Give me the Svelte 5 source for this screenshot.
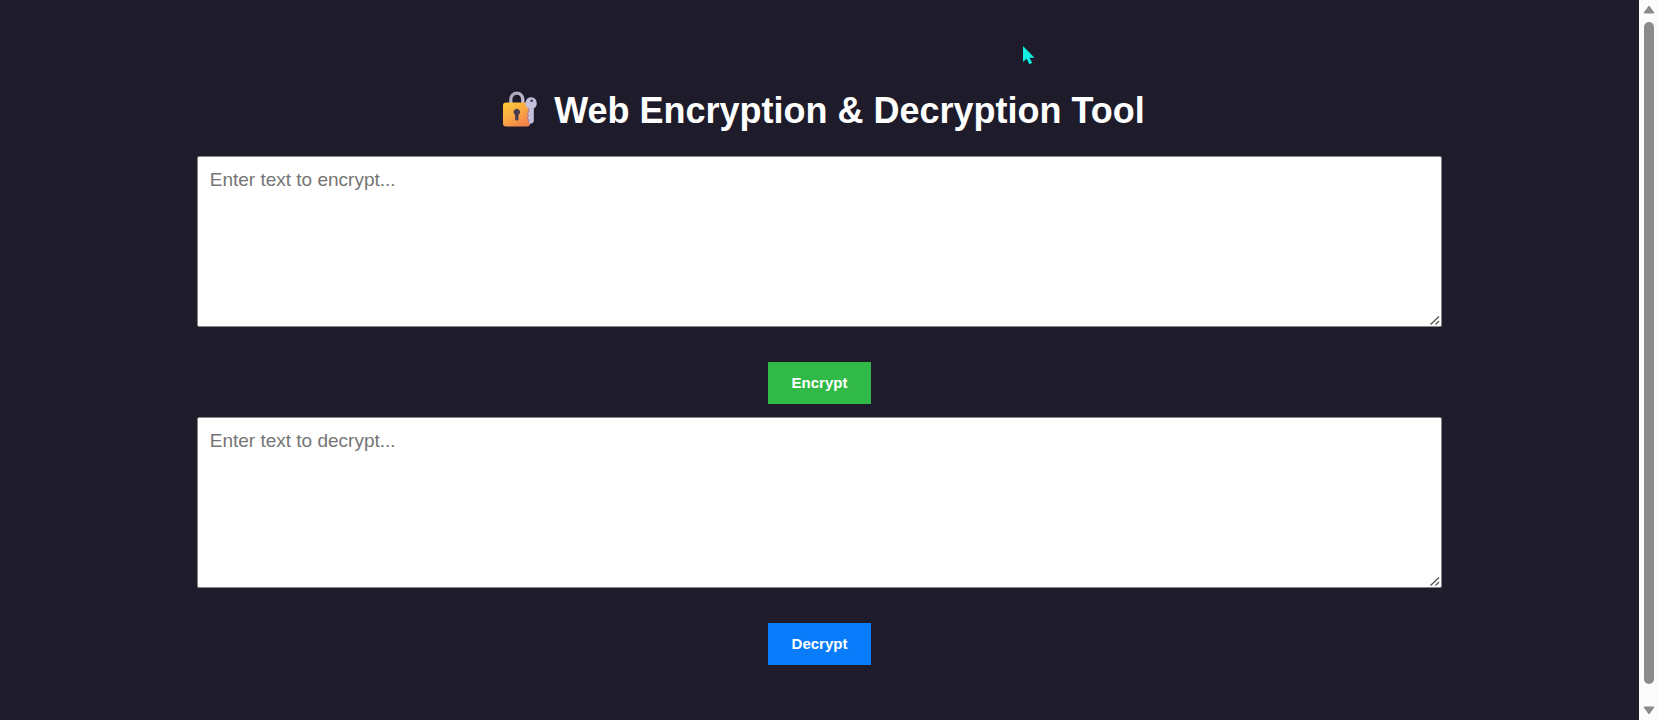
<script>
  let plain = $state('');
  let cipher = $state('');

  function encrypt() {
    if (plain) cipher = btoa(unescape(encodeURIComponent(plain)));
  }

  function decrypt() {
    try {
      if (cipher) plain = decodeURIComponent(escape(atob(cipher)));
    } catch {
      plain = '';
    }
  }
</script>

<div class="window">
  <main>
    <h1>
      <svg class="lock" viewBox="0 0 36 36" aria-hidden="true">
        <defs>
          <linearGradient id="body" x1="0" y1="0" x2="0.7" y2="1">
            <stop offset="0" stop-color="#fdc936" />
            <stop offset="0.5" stop-color="#f9ac42" />
            <stop offset="1" stop-color="#f2814c" />
          </linearGradient>
          <linearGradient id="steel" x1="0" y1="0" x2="1" y2="1">
            <stop offset="0" stop-color="#aaa4b6" />
            <stop offset="1" stop-color="#c9c1dc" />
          </linearGradient>
        </defs>
        <path d="M8.8 13V8.2a6 6 0 0 1 12 0V13" fill="none" stroke="url(#steel)" stroke-width="3.2" />
        <rect x="1" y="11.5" width="27" height="24" rx="3" fill="url(#body)" />
        <path
          d="M29.5 6.3a6 6 0 0 0-3.2 11.1l.4.3v3l-1.5 2 1.5 2-1.5 2.2 1.5 2v3.5h3.5l1.6-1.8V17.4A6 6 0 0 0 29.5 6.3z"
          fill="#c5bfdb"
        />
        <path
          d="M26.3 17.4l.4.3v3l-1.5 2 1.5 2-1.5 2.2 1.5 2v3"
          fill="none"
          stroke="#aa7890"
          stroke-width="1"
        />
        <circle cx="29.7" cy="9.7" r="1.3" fill="#343045" />
        <path d="M14.8 17.8a3.4 3.4 0 0 0-1.7 6.3v3.8a1.7 1.7 0 0 0 3.4 0v-3.8a3.4 3.4 0 0 0-1.7-6.3z" fill="#493b4e" />
      </svg>
      <span>Web Encryption &amp; Decryption Tool</span>
    </h1>

    <textarea aria-label="Text to encrypt" placeholder="Enter text to encrypt..." bind:value={plain}></textarea>
    <button class="encrypt" type="button" onclick={encrypt}>Encrypt</button>

    <textarea aria-label="Text to decrypt" placeholder="Enter text to decrypt..." bind:value={cipher}></textarea>
    <button class="decrypt" type="button" onclick={decrypt}>Decrypt</button>
  </main>

  <div class="scrollbar" aria-hidden="true">
    <svg viewBox="0 0 12 9"><path d="M6 1 11 8H1z" /></svg>
    <div class="thumb"></div>
    <svg viewBox="0 0 12 9"><path d="M6 8 1 1h10z" /></svg>
  </div>

  <svg class="pointer" viewBox="0 0 14 20" aria-hidden="true">
    <path d="M1 1v16l3.6-3.2 2.8 5.4 2.8-1.4-2.7-5.1h5z" fill="#12eee0" />
  </svg>
</div>

<style>
  :global(body) {
    margin: 0;
    background: #1e1c2b;
    font-family: 'Liberation Sans', Arial, sans-serif;
  }

  .window {
    position: relative;
    display: grid;
    grid-template-columns: 1fr 19px;
    min-height: 100vh;
  }

  main {
    display: flex;
    flex-direction: column;
    align-items: center;
    box-sizing: border-box;
    padding: 91px 41px 0;
  }

  h1 {
    display: flex;
    align-items: flex-start;
    gap: 16px;
    margin: 0 0 25px;
    color: #fff;
    font-size: 36px;
    line-height: 40px;
  }

  .lock {
    width: 36px;
    height: 36px;
    padding-left: 8px;
  }

  textarea {
    box-sizing: border-box;
    width: 80%;
    height: 171px;
    padding: 12px;
    border: 1px solid #858585;
    border-radius: 2px;
    background: #fff;
    color: #000;
    font: 19px 'Liberation Sans', Arial, sans-serif;
  }

  textarea::placeholder {
    color: #757575;
  }

  textarea::-webkit-resizer {
    background: url("data:image/svg+xml,%3Csvg xmlns='http://www.w3.org/2000/svg' width='15' height='15'%3E%3Cpath d='M4.5 13.5l8.500-8M9.500 13.500l3.500-3.500' stroke='%23555' stroke-width='1.300' fill='none'/%3E%3C/svg%3E")
      no-repeat right bottom;
  }

  button {
    margin: 35px 0 13px;
    padding: 0 24px;
    border: 0;
    color: #fff;
    font: bold 15px/42px 'Liberation Sans', Arial, sans-serif;
    cursor: pointer;
  }

  .encrypt {
    background: #31b947;
  }

  .decrypt {
    background: #087cfa;
  }

  .scrollbar {
    display: flex;
    flex-direction: column;
    align-items: center;
    gap: 8px;
    box-sizing: border-box;
    padding: 5px 0;
    background: #fcfcfc;
  }

  .scrollbar svg {
    width: 12px;
    height: 9px;
    fill: #8b8b8b;
    stroke: #8b8b8b;
    stroke-width: 1;
    stroke-linejoin: round;
  }

  .thumb {
    flex: 1;
    width: 10px;
    margin-bottom: 14px;
    border-radius: 5px;
    background: #8b8b8b;
  }

  .pointer {
    position: absolute;
    top: 45px;
    left: 1022px;
    width: 14px;
    height: 20px;
    pointer-events: none;
  }
</style>
